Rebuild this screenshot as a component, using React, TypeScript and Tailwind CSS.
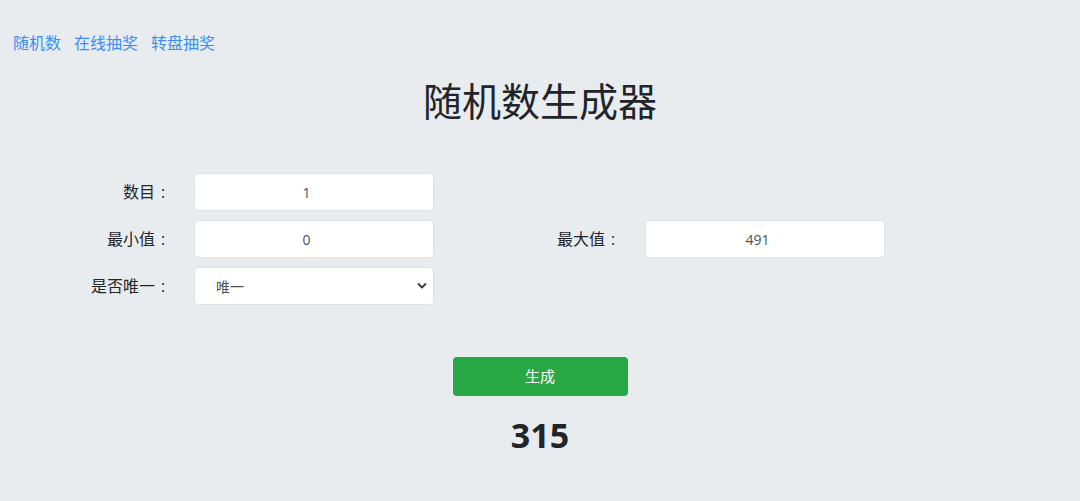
import React from "react";

const font = { fontFamily: '"Open Sans", "Noto Sans CJK SC", sans-serif' };

function Label({ text }: { text: string }) {
  return (
    <label className="w-[180px] pr-[9px] text-right text-[16px] text-[#212529]">
      {text}
      <span className="inline-block w-[16px] text-center">:</span>
    </label>
  );
}

function Field({ value, px }: { value: string; px: string }) {
  return (
    <div className={`w-[270px] ${px}`}>
      <input
        readOnly
        value={value}
        className="w-[240px] h-[38px] rounded-[4px] border border-[#dee2e6] bg-white pr-[15px] text-center text-[14px] text-[#495057] outline-none"
      />
    </div>
  );
}

export default function App() {
  return (
    <div className="w-[1080px] h-[501px] bg-[#e9ecef] text-[#212529] overflow-hidden" style={font}>
      <nav className="flex gap-[13px] pl-[13px] pt-[31px] text-[16px] leading-[24px] text-[#3b8ef5]">
        <a>随机数</a>
        <a>在线抽奖</a>
        <a>转盘抽奖</a>
      </nav>
      <h1 className="mt-[22px] text-center text-[39px] leading-[48px] font-normal text-[#212529]">随机数生成器</h1>
      <div className="mt-[48px] flex flex-col gap-[9px]">
        <div className="flex items-center">
          <Label text="数目" />
          <Field value="1" px="px-[14px]" />
        </div>
        <div className="flex items-center">
          <Label text="最小值" />
          <Field value="0" px="px-[14px]" />
          <Label text="最大值" />
          <Field value="491" px="px-[15px]" />
        </div>
        <div className="flex items-center">
          <Label text="是否唯一" />
          <div className="w-[270px] px-[14px]">
            <div className="relative w-[240px] h-[38px] rounded-[4px] border border-[#dee2e6] bg-white flex items-center pl-[21px] text-[14px] text-[#495057]">
              唯一
              <svg className="absolute right-[6px] top-[14px]" width="10" height="8" viewBox="0 0 10 8">
                <path d="M1.5 2l3.5 3.5L8.5 2" fill="none" stroke="#343a40" strokeWidth="1.8" strokeLinecap="round" strokeLinejoin="round" />
              </svg>
            </div>
          </div>
        </div>
      </div>
      <div className="mt-[52px] flex flex-col items-center">
        <button className="w-[175px] h-[39px] rounded-[4px] bg-[#28a745] text-white text-[15px]">生成</button>
        <div className="mt-[15px] text-[34px] leading-[48px] font-bold text-[#212529]">315</div>
      </div>
    </div>
  );
}
